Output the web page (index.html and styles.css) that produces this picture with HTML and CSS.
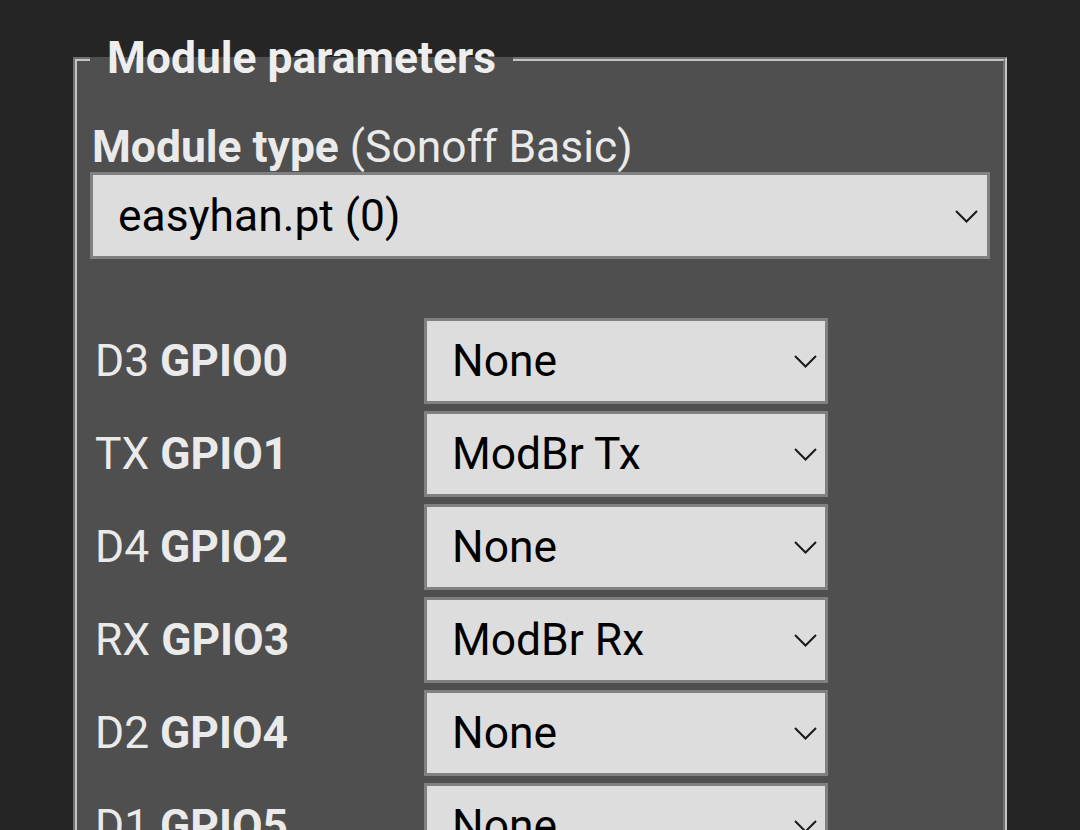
FILE: index.html
```html
<!DOCTYPE html>
<html>
<head>
<meta charset="utf-8">
<link rel="stylesheet" href="styles.css">
</head>
<body>
<fieldset class="params">
  <legend class="legend">Module parameters</legend>
  <div class="type-label"><b>Module type</b> (Sonoff Basic)</div>
  <div class="select-wrap module">
    <select class="sel"><option>easyhan.pt (0)</option></select>
    <svg class="chev" viewBox="0 0 23 13" width="23" height="13"><polyline points="1,1 11.5,11.5 22,1"/></svg>
  </div>
  <div class="gpio">
    <div class="lbl">D3 <b>GPIO0</b></div>
    <div class="select-wrap"><select class="sel"><option>None</option></select><svg class="chev" viewBox="0 0 23 13" width="23" height="13"><polyline points="1,1 11.5,11.5 22,1"/></svg></div>
    <div class="lbl">TX <b>GPIO1</b></div>
    <div class="select-wrap"><select class="sel"><option>ModBr Tx</option></select><svg class="chev" viewBox="0 0 23 13" width="23" height="13"><polyline points="1,1 11.5,11.5 22,1"/></svg></div>
    <div class="lbl">D4 <b>GPIO2</b></div>
    <div class="select-wrap"><select class="sel"><option>None</option></select><svg class="chev" viewBox="0 0 23 13" width="23" height="13"><polyline points="1,1 11.5,11.5 22,1"/></svg></div>
    <div class="lbl">RX <b>GPIO3</b></div>
    <div class="select-wrap"><select class="sel"><option>ModBr Rx</option></select><svg class="chev" viewBox="0 0 23 13" width="23" height="13"><polyline points="1,1 11.5,11.5 22,1"/></svg></div>
    <div class="lbl">D2 <b>GPIO4</b></div>
    <div class="select-wrap"><select class="sel"><option>None</option></select><svg class="chev" viewBox="0 0 23 13" width="23" height="13"><polyline points="1,1 11.5,11.5 22,1"/></svg></div>
    <div class="lbl">D1 <b>GPIO5</b></div>
    <div class="select-wrap"><select class="sel"><option>None</option></select><svg class="chev" viewBox="0 0 23 13" width="23" height="13"><polyline points="1,1 11.5,11.5 22,1"/></svg></div>
  </div>
</fieldset>
</body>
</html>
```
FILE: styles.css
```css
html, body {
  margin: 0;
  padding: 0;
  background: #252525;
  height: 100%;
  overflow: hidden;
}
body {
  font-family: Roboto, "Liberation Sans", sans-serif;
  font-size: 44.4px;
  color: #eaeaea;
}
.params {
  margin: 33px 73px 0 73px;
  padding: 39px 13px 0 13px;
  border: 4px groove #c4c4c4;
  background: #4f4f4f;
  min-height: 900px;
}
.legend {
  padding: 0 17px;
  font-weight: bold;
  color: #eeeeee;
  line-height: 51px;
}
.type-label {
  line-height: 49px;
  margin-left: 2px;
}
.type-label b { font-weight: bold; }
.select-wrap {
  position: relative;
  height: 87px;
}
.sel {
  appearance: none;
  -webkit-appearance: none;
  width: 100%;
  height: 100%;
  box-sizing: border-box;
  border: 3px solid #808080;
  border-radius: 0;
  background: #dddddd;
  color: #000;
  font-family: Roboto, "Liberation Sans", sans-serif;
  font-size: 44.4px;
  padding: 0 0 0 25px;
  margin: 0;
  outline: none;
}
.chev {
  position: absolute;
  right: 12px;
  top: 50%;
  margin-top: -6px;
  fill: none;
  stroke: #1a1a1a;
  stroke-width: 2;
  pointer-events: none;
}
.gpio {
  display: grid;
  grid-template-columns: 334px 404px;
  grid-auto-rows: 86px;
  row-gap: 7px;
  margin-top: 59px;
  align-items: center;
}
.gpio .select-wrap {
  height: 86px;
}
.gpio .chev { right: 11px; }
.lbl {
  padding-left: 5px;
  line-height: 49px;
}
.lbl b { font-weight: bold; }
```
